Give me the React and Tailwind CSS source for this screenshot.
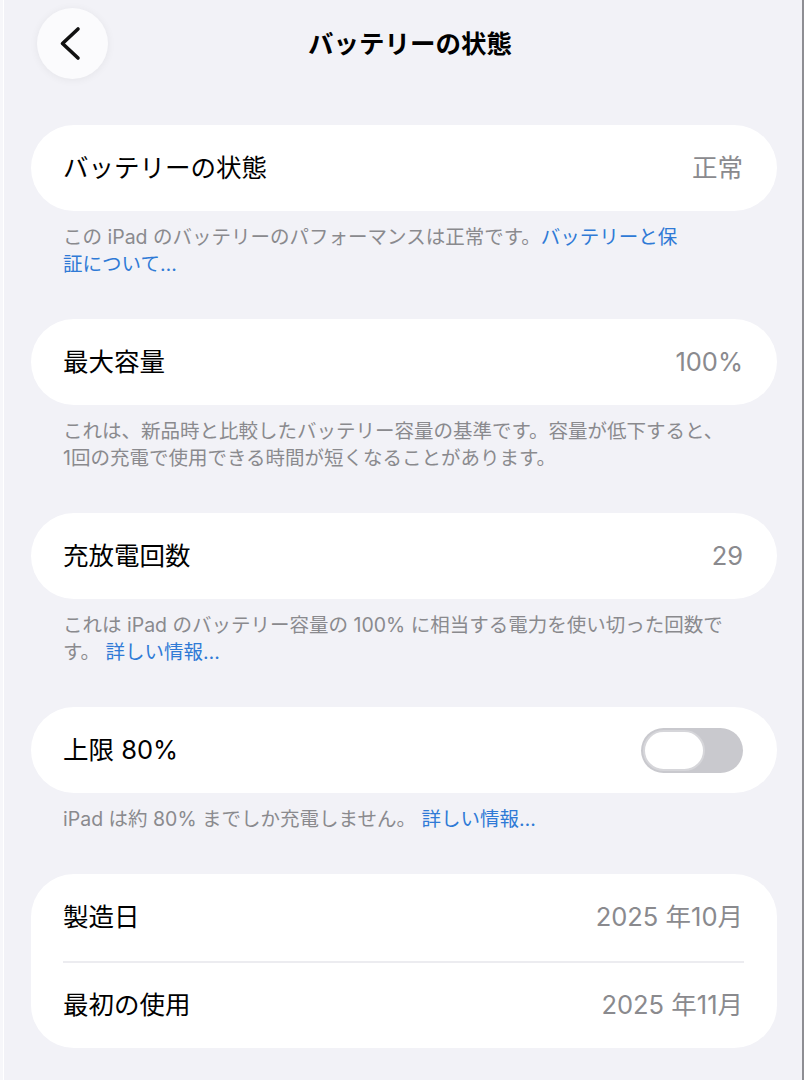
import React from "react";

const font = { fontFamily: 'Inter, "Noto Sans CJK JP", sans-serif' };

const Row = ({ label, value, children }) => (
  <div className="flex h-[86px] items-center justify-between rounded-full bg-white pl-[32px] pr-[34px]">
    <span className="text-[25.5px] text-black">{label}</span>
    {value && <span className="text-[25.5px] text-[#8a8a8e]">{value}</span>}
    {children}
  </div>
);

const Footer = ({ children }) => (
  <p className="mb-[41px] pl-[32px] pt-[13px] text-[19.5px] leading-[27px] text-[#8a8a8e]">
    {children}
  </p>
);

const Link = ({ children }) => <span className="text-[#2f7ad6]">{children}</span>;

const Toggle = () => (
  <div className="flex h-[45px] w-[102px] items-center rounded-full bg-[#c9c9ce] p-[2px]">
    <div className="h-[41px] w-[62px] rounded-full border-2 border-[#d6d6da] bg-white" />
  </div>
);

export default function App() {
  return (
    <div className="flex min-h-[1080px] w-[804px] bg-[#f2f2f7]" style={font}>
      {/* left edge of the sidebar */}
      <div className="w-[4px] border-r border-white bg-[#f7f7fa]" />

      <main className="flex-1">
        {/* Header */}
        <header className="grid h-[125px] grid-cols-[1fr_auto_1fr] items-start">
          <div className="pl-[33px] pt-[8px]">
            <button className="flex h-[71px] w-[71px] items-center justify-center rounded-full bg-[#fbfbfd] shadow-[0_1px_8px_rgba(0,0,0,0.06)]">
              <svg width="71" height="71" viewBox="0 0 71 71" fill="none">
                <path
                  d="M41 21 L25.5 35.5 L41 50"
                  stroke="#111"
                  strokeWidth="3.6"
                  strokeLinecap="round"
                  strokeLinejoin="round"
                />
              </svg>
            </button>
          </div>
          <h1 className="ml-[14px] mt-[8px] text-[25.5px] font-bold leading-[71px] text-black">
            バッテリーの状態
          </h1>
          <div />
        </header>

        <section className="ml-[27px] mr-[25px]">
          <Row label="バッテリーの状態" value="正常" />
          <Footer>
            この iPad のバッテリーのパフォーマンスは正常です。<Link>バッテリーと保</Link>
            <br />
            <Link>証について…</Link>
          </Footer>

          <Row label="最大容量" value="100%" />
          <Footer>
            これは、新品時と比較したバッテリー容量の基準です。容量が低下すると、
            <br />
            1回の充電で使用できる時間が短くなることがあります。
          </Footer>

          <Row label="充放電回数" value="29" />
          <Footer>
            これは iPad のバッテリー容量の 100% に相当する電力を使い切った回数で
            <br />
            す。 <Link>詳しい情報…</Link>
          </Footer>

          <Row label="上限 80%">
            <Toggle />
          </Row>
          <Footer>
            iPad は約 80% までしか充電しません。 <Link>詳しい情報…</Link>
          </Footer>

          <div className="rounded-[43px] bg-white">
            <div className="flex h-[87px] items-center justify-between pl-[32px] pr-[34px]">
              <span className="text-[25.5px] text-black">製造日</span>
              <span className="text-[25.5px] text-[#8a8a8e]">2025 年10月</span>
            </div>
            <div className="ml-[32px] mr-[33px] h-[2px] bg-[#ececf0]" />
            <div className="flex h-[85px] items-center justify-between pl-[32px] pr-[34px]">
              <span className="text-[25.5px] text-black">最初の使用</span>
              <span className="text-[25.5px] text-[#8a8a8e]">2025 年11月</span>
            </div>
          </div>
        </section>
      </main>

      {/* right edge */}
      <div className="w-[2px] bg-[#8e8e93]" />
    </div>
  );
}
